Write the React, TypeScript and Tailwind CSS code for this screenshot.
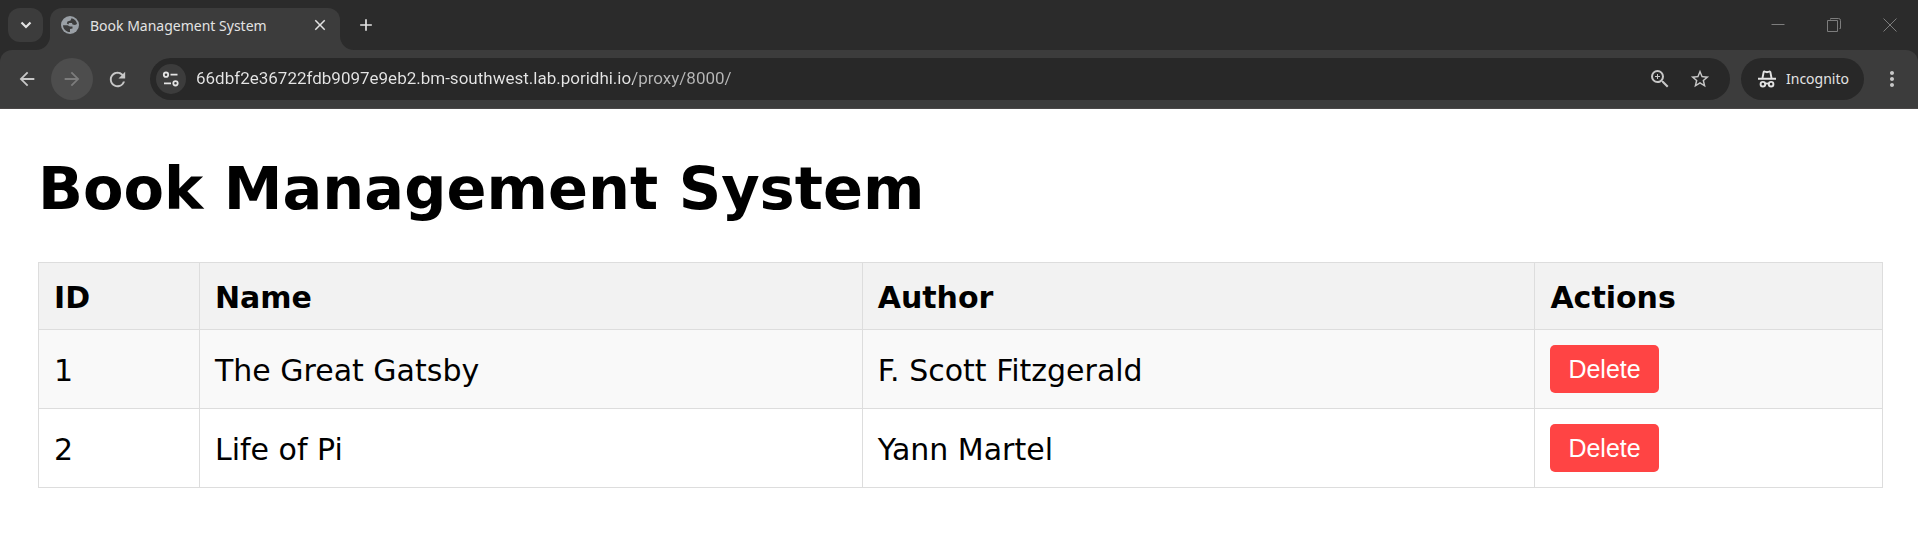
import { useState } from "react";
import type { ReactNode } from "react";
import {
  MdArrowBack,
  MdArrowForward,
  MdRefresh,
  MdStarBorder,
  MdZoomIn,
  MdMoreVert,
  MdAdd,
  MdClose,
} from "react-icons/md";

type Book = { id: number; name: string; author: string };

const initialBooks: Book[] = [
  { id: 1, name: "The Great Gatsby", author: "F. Scott Fitzgerald" },
  { id: 2, name: "Life of Pi", author: "Yann Martel" },
];

function IconButton({ label, className = "", children }: { label: string; className?: string; children: ReactNode }) {
  return (
    <button type="button" aria-label={label} className={`flex shrink-0 items-center justify-center ${className}`}>
      {children}
    </button>
  );
}

function ChevronIcon() {
  return (
    <svg viewBox="0 0 12 12" className="size-3" fill="none" stroke="currentColor" strokeWidth="2.2">
      <path d="M1.5 3.5 6 8l4.5-4.5" />
    </svg>
  );
}

function GlobeIcon() {
  return (
    <svg viewBox="0 0 18 18" className="size-[18px] shrink-0">
      <circle cx="9" cy="9" r="9" fill="#9aa0a6" />
      <path
        fill="#3c3c3c"
        d="M10.500 2.200C13.500 2.700 15.700 5 16 8L14 9 11.500 8.500 11 7 8 7 7.500 8.500 5.800 7.500 6.500 5.500 9.500 4.500Z"
      />
      <path fill="#3c3c3c" d="M2 9.200 6.500 9.200 9 10.500 11.500 10.500 11.500 12.500 9 13 9 16C5 15.900 2.200 13 2 9.200Z" />
    </svg>
  );
}

function TuneIcon() {
  return (
    <svg viewBox="0 0 18 18" className="size-[18px]" fill="none" stroke="currentColor" strokeWidth="1.8">
      <circle cx="4" cy="4.7" r="2.2" />
      <path d="M8.5 4.7h7M2 13.3h7" />
      <circle cx="13.5" cy="13.3" r="2.2" />
    </svg>
  );
}

function IncognitoIcon() {
  return (
    <svg viewBox="0 0 20 20" className="size-5" fill="none" stroke="currentColor" strokeWidth="1.9">
      <path d="M5.5 9 6.6 3.2Q7 2.2 8 2.6L10 3.2 12 2.6Q13 2.2 13.4 3.2L14.5 9M1 9.800h18" />
      <circle cx="5.9" cy="15.2" r="2.3" />
      <circle cx="14.1" cy="15.2" r="2.3" />
      <path d="M8.2 14.9q1.8-1 3.6 0" />
    </svg>
  );
}

function TabStrip() {
  return (
    <div className="flex h-[50px] bg-[#2b2b2b] pl-2 text-[#e3e3e3]">
      <IconButton label="Search tabs" className="mt-2 h-[34px] w-[35px] rounded-xl bg-[#3c3c3c]">
        <ChevronIcon />
      </IconButton>
      <div className="relative ml-[7px] mt-2 flex h-[42px] w-[290px] items-center rounded-t-xl bg-[#3c3c3c] pb-[8px] pl-[11px] pr-[11px]">
        <svg viewBox="0 0 14 14" className="absolute bottom-0 right-full size-[14px]" fill="#3c3c3c">
          <path d="M14 0v14H0A14 14 0 0 0 14 0Z" />
        </svg>
        <svg viewBox="0 0 14 14" className="absolute bottom-0 left-full size-[14px]" fill="#3c3c3c">
          <path d="M0 0v14h14A14 14 0 0 1 0 0Z" />
        </svg>
        <GlobeIcon />
        <span className="ml-[11px] flex-1 whitespace-nowrap pt-px text-sm">Book Management System</span>
        <IconButton label="Close tab" className="size-[18px]">
          <MdClose className="size-[18px]" />
        </IconButton>
      </div>
      <IconButton label="New tab" className="ml-4 mt-[15px] size-5">
        <MdAdd className="size-5" />
      </IconButton>
      <div className="ml-auto flex h-[50px] items-center text-[#7d7d7d]">
        <IconButton label="Minimize" className="h-full w-14">
          <svg viewBox="0 0 14 14" className="size-[14px]" stroke="currentColor"><path d="M.5 6.5h13" /></svg>
        </IconButton>
        <IconButton label="Restore" className="h-full w-14">
          <svg viewBox="0 0 14 14" className="size-[14px]" fill="none" stroke="currentColor"><path d="M.5 2.5h10v11h-10zM3.500 1.500v-1h8q2 0 2 2v8h-1" /></svg>
        </IconButton>
        <IconButton label="Close" className="h-full w-14">
          <svg viewBox="0 0 14 14" className="size-[14px]" stroke="currentColor"><path d="m.5.5 13 13M13.5.5l-13 13" /></svg>
        </IconButton>
      </div>
    </div>
  );
}

function Toolbar() {
  return (
    <div className="bg-[#2b2b2b]">
      <div className="flex h-[59px] items-center rounded-t-xl border-b border-[#4a4747] bg-[#3c3c3c] pl-[6px] text-[#c7c7c7]">
        <IconButton label="Back" className="size-[42px]">
          <MdArrowBack className="size-[22px]" />
        </IconButton>
        <IconButton label="Forward" className="ml-[3px] size-[42px] rounded-full bg-[#4d4d4d] text-[#7c7c7c]">
          <MdArrowForward className="size-[22px]" />
        </IconButton>
        <IconButton label="Reload" className="ml-[3px] size-[42px]">
          <MdRefresh className="size-[23px]" />
        </IconButton>
        <div className="ml-3 flex h-[42px] flex-1 items-center rounded-full bg-[#282828] pl-[6px] pr-[18px]">
          <IconButton label="View site information" className="size-[30px] rounded-full bg-[#3c3c3c] text-[#e3e3e3]">
            <TuneIcon />
          </IconButton>
          <input
            type="text"
            aria-label="Address and search bar"
            defaultValue="66dbf2e36722fdb9097e9eb2.bm-southwest.lab.poridhi.io/proxy/8000/"
            className="ml-[10px] min-w-0 flex-1 bg-[linear-gradient(90deg,#e6e6e6_437px,#b8b8b8_437px)] bg-clip-text font-['Roboto',sans-serif] text-[17px] text-transparent outline-none"
          />
          <IconButton label="Zoom" className="size-6">
            <MdZoomIn className="size-6" />
          </IconButton>
          <IconButton label="Bookmark this tab" className="ml-4 size-6">
            <MdStarBorder className="size-[22px]" />
          </IconButton>
        </div>
        <button type="button" className="ml-[11px] flex h-[42px] w-[123px] items-center rounded-full bg-[#282828] pl-4 text-[#e3e3e3]">
          <IncognitoIcon />
          <span className="ml-[9px] text-sm">Incognito</span>
        </button>
        <IconButton label="Customize and control" className="ml-4 mr-[14px] size-6">
          <MdMoreVert className="size-[26px]" />
        </IconButton>
      </div>
    </div>
  );
}

const border = "border border-[#dddddd] text-left";
const textCell = `${border} px-[15px] pb-[13px] pt-[17px]`;

export default function App() {
  const [books, setBooks] = useState(initialBooks);
  return (
    <div className="min-h-screen bg-white text-black">
      <header className="font-['Noto_Sans',sans-serif]">
        <TabStrip />
        <Toolbar />
      </header>
      <main className="pl-[38px] pr-[35px] pt-[43px] font-['DejaVu_Sans',sans-serif]">
        <h1 className="text-[59px] font-bold leading-[73px]">Book Management System</h1>
        <table className="mt-[37px] w-full table-fixed border-collapse text-[30px] leading-9">
          <colgroup>
            <col className="w-[8.73%]" />
            <col className="w-[35.94%]" />
            <col className="w-[36.48%]" />
            <col />
          </colgroup>
          <thead>
            <tr className="bg-[#f2f2f2]">
              <th className={textCell}>ID</th>
              <th className={textCell}>Name</th>
              <th className={textCell}>Author</th>
              <th className={textCell}>Actions</th>
            </tr>
          </thead>
          <tbody>
            {books.map((book) => (
              <tr key={book.id} className="odd:bg-[#f9f9f9]">
                <td className={textCell}>{book.id}</td>
                <td className={textCell}>{book.name}</td>
                <td className={textCell}>{book.author}</td>
                <td className={`${border} p-[15px]`}>
                  <button
                    type="button"
                    onClick={() => setBooks(books.filter((b) => b.id !== book.id))}
                    className="block h-12 cursor-pointer rounded-[5px] bg-[#ff4444] px-[18px] font-['Liberation_Sans',sans-serif] text-[25px] leading-7 text-white"
                  >
                    Delete
                  </button>
                </td>
              </tr>
            ))}
          </tbody>
        </table>
      </main>
    </div>
  );
}
